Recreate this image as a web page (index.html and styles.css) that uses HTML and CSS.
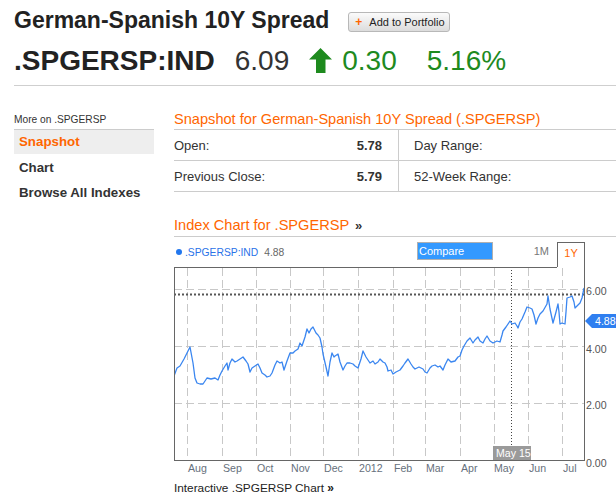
FILE: index.html
```html
<!DOCTYPE html>
<html>
<head>
<meta charset="utf-8">
<link rel="stylesheet" href="styles.css">
</head>
<body>
<div class="page">
  <header class="hdr">
    <div class="title-row">
      <h1 class="title">German-Spanish 10Y Spread</h1>
      <button class="add-btn"><span class="plus">+</span>Add to Portfolio</button>
    </div>
    <div class="quote-row">
      <span class="ticker">.SPGERSP:IND</span>
      <span class="price">6.09</span>
      <svg class="arrow" width="23" height="25" viewBox="0 0 23 25"><polygon points="11.5,0 23,11.5 16.5,11.5 16.5,25 7,25 7,11.5 0,11.5" fill="#1e8a1e"/></svg>
      <span class="chg">0.30</span>
      <span class="pct">5.16%</span>
    </div>
  </header>
  <div class="content">
    <nav class="side">
      <div class="side-label">More on .SPGERSP</div>
      <div class="side-item active">Snapshot</div>
      <div class="side-item">Chart</div>
      <div class="side-item">Browse All Indexes</div>
    </nav>
    <main class="main">
      <h2 class="sec-title">Snapshot for German-Spanish 10Y Spread (.SPGERSP)</h2>
      <div class="snap">
        <div class="cell left"><span>Open:</span><b>5.78</b></div>
        <div class="cell right">Day Range:</div>
        <div class="cell left"><span>Previous Close:</span><b>5.79</b></div>
        <div class="cell right">52-Week Range:</div>
      </div>
      <h2 class="sec-title chart-title">Index Chart for .SPGERSP <span class="raquo">&raquo;</span></h2>
      <div class="chart">
        <div class="chart-top">
          <div class="legend"><span class="dot"></span><span class="leg-name">.SPGERSP:IND</span><span class="leg-val">4.88</span></div>
          <div class="compare">Compare</div>
          <div class="range">1M</div>
          <div class="tab">1Y</div>
        </div>
        <svg class="plot" width="442" height="214" viewBox="0 0 442 214">
          <g stroke="#c8c8c8" stroke-width="1" stroke-dasharray="8 4" fill="none">
            <line x1="0" y1="22.5" x2="410" y2="22.5"/>
            <line x1="0" y1="79.5" x2="410" y2="79.5"/>
            <line x1="0" y1="136.5" x2="410" y2="136.5"/>
            <line x1="13.5" y1="1" x2="13.5" y2="193"/>
            <line x1="48.5" y1="1" x2="48.5" y2="193"/>
            <line x1="82.5" y1="1" x2="82.5" y2="193"/>
            <line x1="116.5" y1="1" x2="116.5" y2="193"/>
            <line x1="149.5" y1="1" x2="149.5" y2="193"/>
            <line x1="184.5" y1="1" x2="184.5" y2="193"/>
            <line x1="219.5" y1="1" x2="219.5" y2="193"/>
            <line x1="251.5" y1="1" x2="251.5" y2="193"/>
            <line x1="286.5" y1="1" x2="286.5" y2="193"/>
            <line x1="320.5" y1="1" x2="320.5" y2="193"/>
            <line x1="354.5" y1="1" x2="354.5" y2="193"/>
            <line x1="388.5" y1="1" x2="388.5" y2="193"/>
          </g>
          <line x1="0" y1="27.5" x2="410" y2="27.5" stroke="#555" stroke-width="2" stroke-dasharray="2 2"/>
          <line x1="337.5" y1="0" x2="337.5" y2="179" stroke="#444" stroke-width="1" stroke-dasharray="1 2"/>
          <polyline fill="none" stroke="#3a86f0" stroke-width="1.3" stroke-linejoin="round" points="0,109 3,101 6,99 10,92 16,80 19,96 21,111 23,116 26,117 29,117 31,114 33,111 37,112 41,111 44,113 46,108 48,104 51,99 53,96 54,103 56,96 58,92 61,95 63,94 66,92 69,90 72,94 74,97 76,105 78,101 81,99 84,97 86,101 88,106 91,108 93,110 96,109 98,106 101,98 103,94 106,96 108,95 110,103 112,97 113,94 116,86 119,86 121,84 124,82 126,76 128,79 131,70 133,62 135,66 137,62 139,60 142,66 144,68 146,71 148,80 149,87 152,100 154,109 156,95 158,86 160,90 161,89 164,87 166,95 169,103 171,99 173,96 176,96 179,97 181,99 184,101 187,92 189,84 192,90 196,96 199,94 201,97 204,95 206,92 209,95 211,96 213,100 214,104 217,103 219,107 222,105 226,103 229,99 231,96 234,92 237,97 239,100 241,102 245,100 249,102 251,105 253,106 256,101 258,99 261,98 264,100 266,99 269,103 271,98 274,92 277,95 281,94 284,90 286,89 288,83 290,79 293,74 296,71 299,76 301,73 304,70 306,74 309,76 311,72 313,69 316,74 319,76 323,74 326,75 328,68 329,64 332,60 336,54 338,57 341,56 343,59 344,61 346,55 348,52 351,45 353,40 356,41 358,42 360,48 362,57 364,51 366,47 369,44 373,37 374,29 376,42 379,56 382,45 384,37 385,45 386,57 388,56 391,57 392,45 393,31 396,30 398,29 400,35 401,41 404,38 406,36 408,31 410,21"/>
          <g stroke="#666" stroke-width="1" fill="none">
            <line x1="0" y1="0.5" x2="383" y2="0.5"/>
            <line x1="0.5" y1="0" x2="0.5" y2="194"/>
            <line x1="0" y1="193.5" x2="411" y2="193.5"/>
            <line x1="410.5" y1="0" x2="410.5" y2="194"/>
          </g>
          <rect x="319" y="179" width="38" height="14" fill="#9a9a9a"/>
          <text class="may" x="322" y="190">May 15</text>
          <polygon points="411,54 418,47 442,47 442,61 418,61" fill="#2f7ff0"/>
          <text class="flag" x="421" y="58">4.88</text>
          <g class="yax">
            <text x="412" y="28">6.00</text>
            <text x="412" y="85.5">4.00</text>
            <text x="412" y="142">2.00</text>
            <text x="412" y="200">0.00</text>
          </g>
          <g class="xax">
            <text x="14" y="205">Aug</text>
            <text x="49" y="205">Sep</text>
            <text x="83" y="205">Oct</text>
            <text x="117" y="205">Nov</text>
            <text x="150" y="205">Dec</text>
            <text x="185" y="205">2012</text>
            <text x="220" y="205">Feb</text>
            <text x="252" y="205">Mar</text>
            <text x="287" y="205">Apr</text>
            <text x="320" y="205">May</text>
            <text x="355" y="205">Jun</text>
            <text x="389" y="205">Jul</text>
          </g>
        </svg>
        <div class="chart-link">Interactive .SPGERSP Chart <span class="raquo-sm">&raquo;</span></div>
      </div>
    </main>
  </div>
</div>
</body>
</html>
```
FILE: styles.css
```css
* { box-sizing: border-box; }
html, body { margin: 0; padding: 0; background: #fff; }
body { font-family: "Liberation Sans", Arial, sans-serif; color: #333; width: 616px; overflow: hidden; }

.hdr { margin-left: 14px; padding-top: 7px; padding-bottom: 8px; border-bottom: 1px solid #cfcfcf; }
.title-row { display: flex; align-items: center; height: 26px; }
.title { margin: 0; font-size: 23px; line-height: 26px; font-weight: bold; color: #222; }
.add-btn { margin-left: 19px; margin-top: 3px; height: 20px; width: 102px; padding: 0 0 0 6px; display: flex; align-items: center;
  font-family: "Liberation Sans", Arial, sans-serif; font-size: 11px; color: #222;
  border: 1px solid #b8b8b8; border-radius: 3px; background: linear-gradient(#fbfbfb, #dcdcdc); }
.plus { color: #f60; font-weight: bold; font-size: 12px; margin-right: 7px; }

.quote-row { display: flex; align-items: center; height: 32px; margin-top: 12px; font-size: 28px; line-height: 32px; }
.ticker { font-weight: bold; color: #222; margin-right: 20px; }
.price { color: #333; margin-right: 20px; }
.arrow { margin-right: 10px; margin-top: -1px; }
.chg { color: #1e8a1e; margin-right: 30px; }
.pct { color: #1e8a1e; }

.content { display: flex; padding-left: 14px; margin-top: 24px; }
.side { width: 140px; flex: none; }
.side-label { font-size: 10.2px; line-height: 19px; height: 20px; color: #333; border-bottom: 1px solid #ccc; }
.side-item { font-size: 13.3px; font-weight: bold; line-height: 25px; height: 25px; padding-left: 5px; color: #333; }
.side-item.active { color: #f60; background: #eee; height: 24px; line-height: 24px; margin-bottom: 1px; }

.main { margin-left: 20px; flex: 1; }
.sec-title { margin: 0; font-size: 14.6px; font-weight: normal; color: #f60; line-height: 19px; height: 20px; border-bottom: 1px solid #ccc; }
.snap { display: grid; grid-template-columns: 225px 1fr; }
.cell { height: 31px; border-bottom: 1px solid #ccc; font-size: 13px; display: flex; align-items: center; color: #333; }
.cell.left { justify-content: space-between; padding-right: 16px; border-right: 1px solid #ccc; }
.cell.left b { color: #333; }
.cell.right { padding-left: 15px; }

.chart-title { margin-top: 23px; height: 22px; line-height: 20px; }
.raquo { color: #333; font-weight: bold; font-size: 13px; margin-left: 2px; }

.chart-top { display: flex; height: 30px; align-items: flex-start; }
.legend { display: flex; align-items: center; height: 30px; padding-left: 2px; width: 243px; font-size: 10.3px; }
.dot { width: 6px; height: 6px; border-radius: 50%; background: #2277ee; margin-right: 3px; margin-top: -1px; }
.leg-name { color: #2a72e8; }
.leg-val { color: #666; margin-left: 6px; }
.compare { margin-top: 5px; width: 76px; height: 18px; background: #3399ff; border: 1px solid #b0b0b0; color: #fff; font-size: 11px; line-height: 16px; padding-left: 1px; }
.range { width: 64px; text-align: right; padding-right: 8px; font-size: 11px; color: #777; margin-top: 8px; }
.tab { margin-top: 5px; width: 28px; height: 25px; border: 1px solid #666; border-bottom: none; background: #fff; color: #f60; font-size: 11px; text-align: center; padding-top: 4px; }

.plot { display: block; }
.plot text { font-family: "Liberation Sans", Arial, sans-serif; font-size: 10.6px; }
.xax text { fill: #66707c; }
.yax text { fill: #555; }
.may { fill: #fff; }
.flag { fill: #fff; }

.chart-link { font-size: 11.8px; color: #222; line-height: 14px; }
.raquo-sm { font-size: 12px; font-weight: bold; }
```
